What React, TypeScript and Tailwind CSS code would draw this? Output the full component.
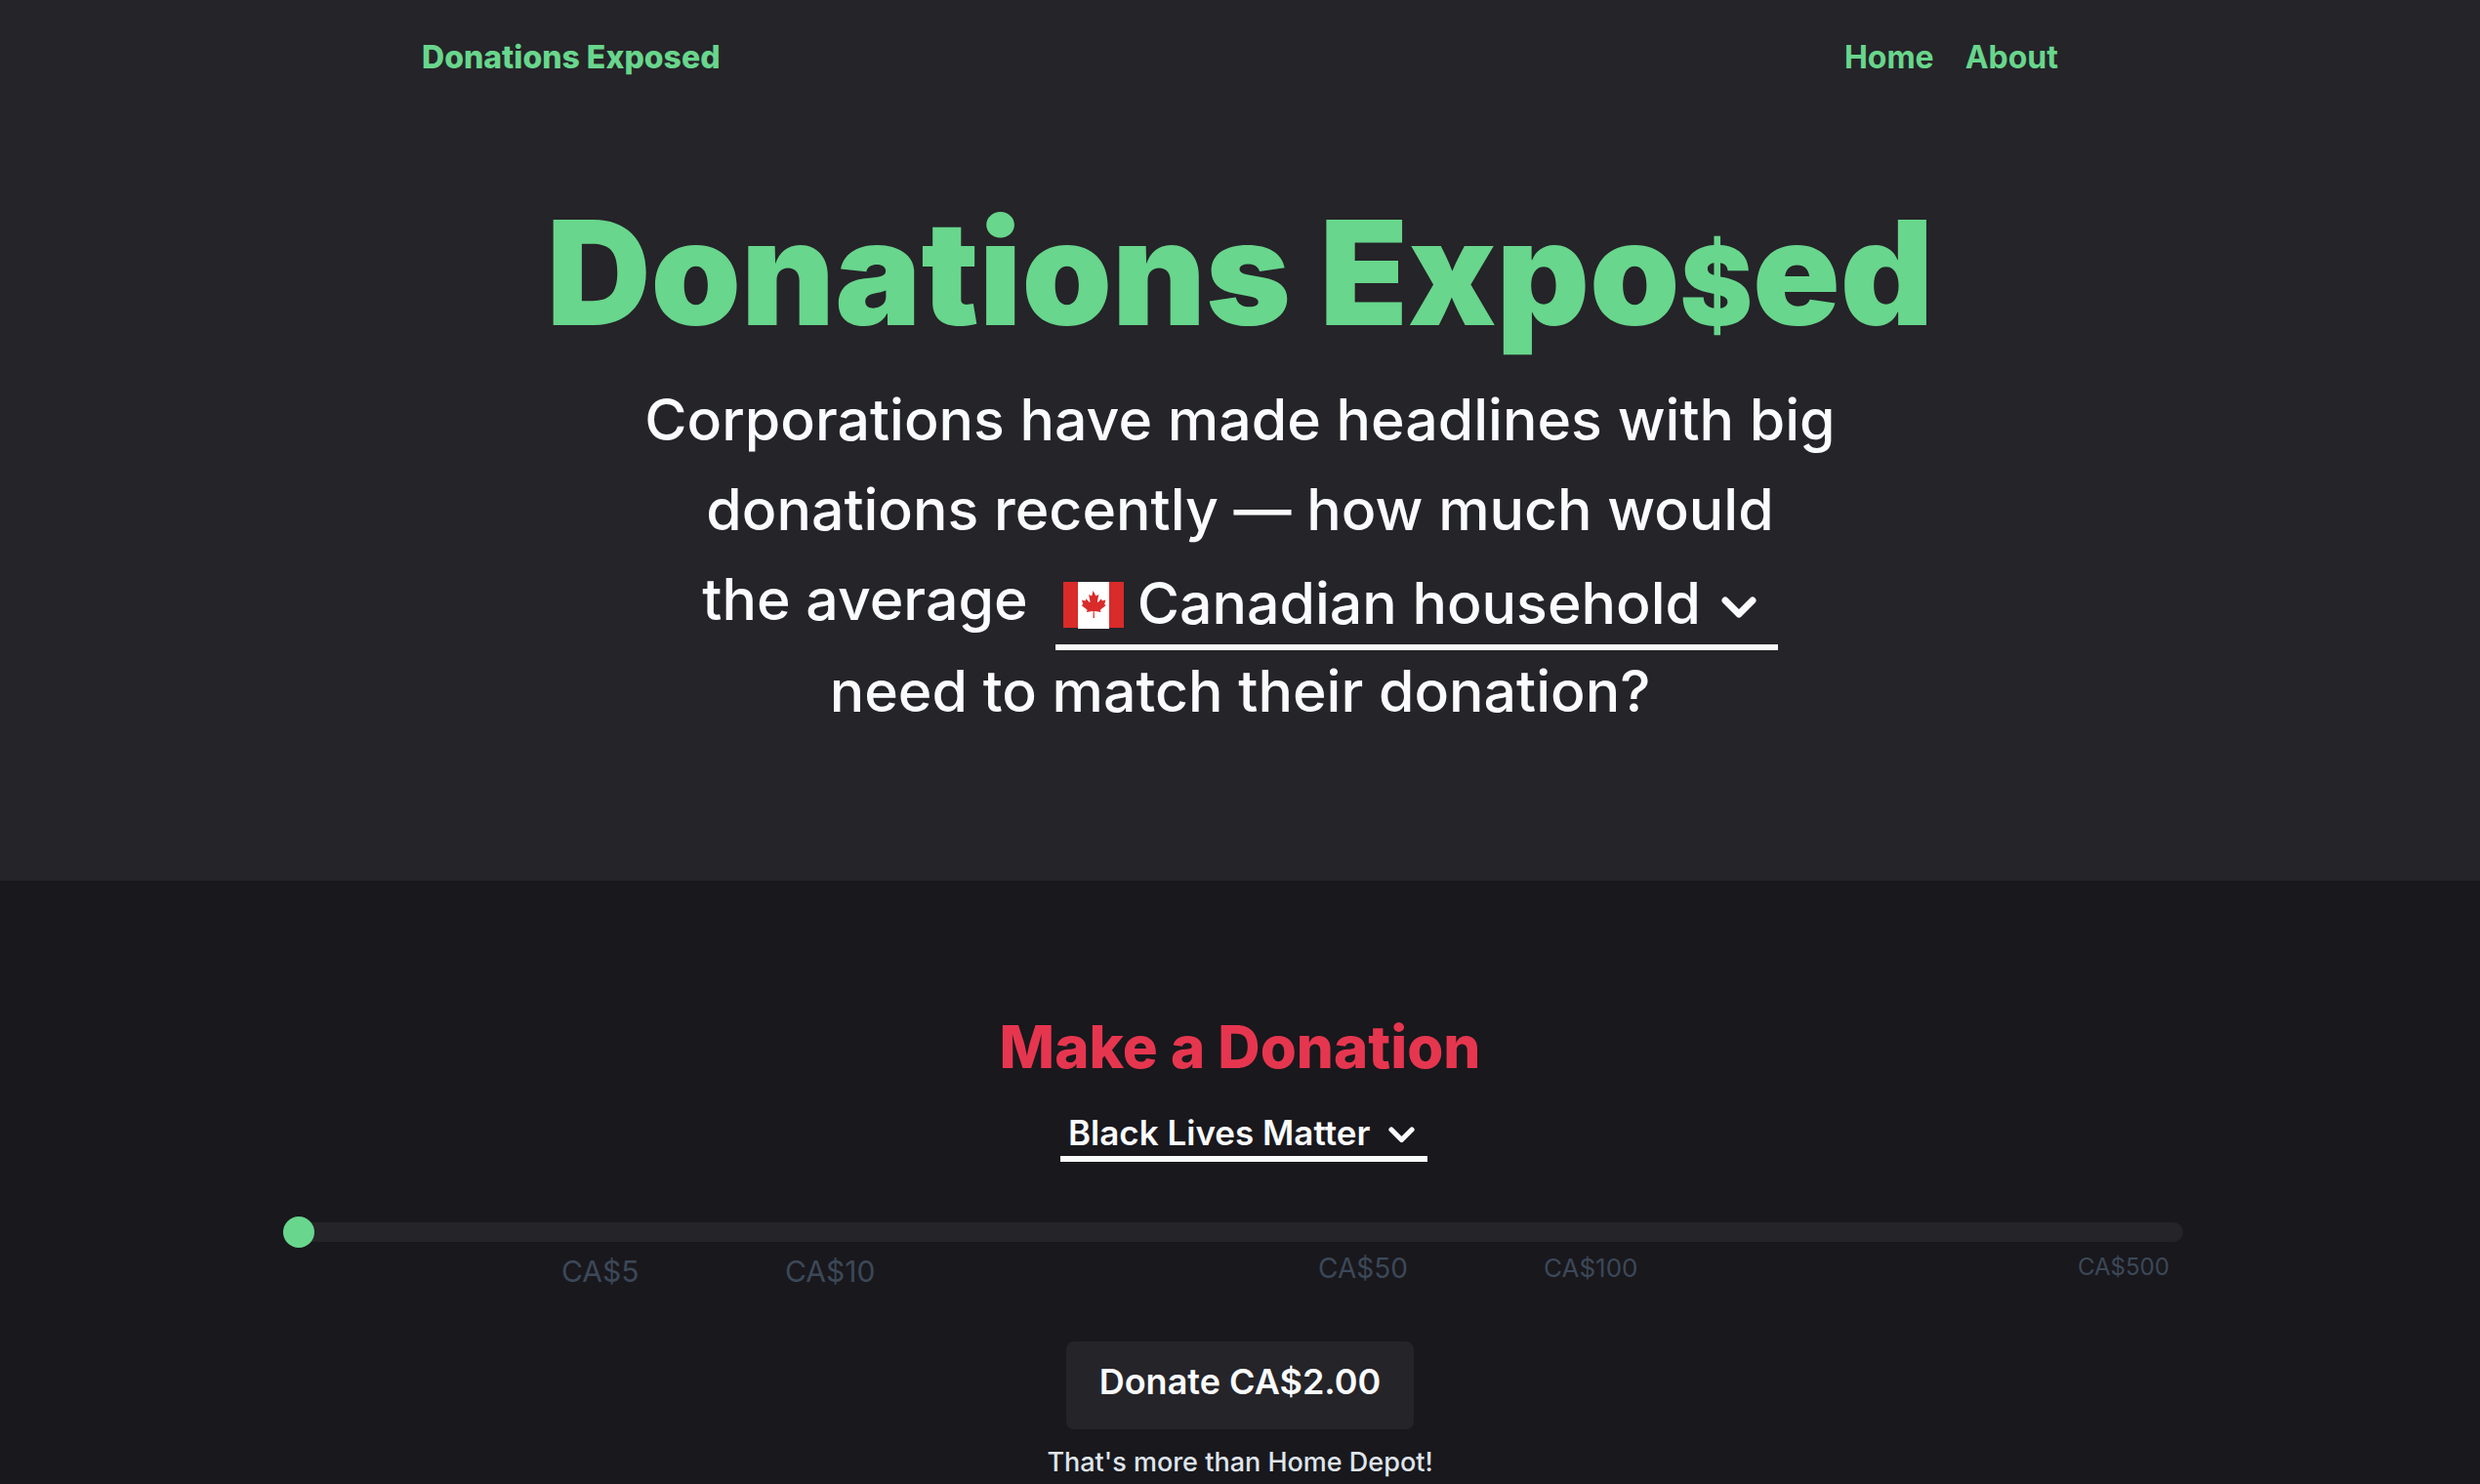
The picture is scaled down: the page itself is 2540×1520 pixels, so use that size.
import { useState } from "react";
import type { ReactNode } from "react";
import clsx from "clsx";

const ticks = [
  { amount: 5, className: "col-start-2 text-[30px] leading-8" },
  { amount: 10, className: "text-[30px] leading-8" },
  { amount: 50, className: "text-[28px] leading-[26px]" },
  { amount: 100, className: "text-[26px] leading-[26px]" },
  { amount: 500, className: "text-[24px] leading-6" },
];

function CanadaFlag({ className }: { className?: string }) {
  return (
    <svg viewBox="0 0 62 48" className={className} aria-hidden="true">
      <rect width="62" height="47" fill="#d82b2a" />
      <rect x="15" width="32" height="48" fill="#ffffff" />
      <path
        fill="#d82b2a"
        d="M30.6 9l2.4 4.8c.4.6.8.5 1.300.2l2-1-1.300 6.800c-.3 1.300.6 1.300 1 .7l3-3.300.5 1.700c.2.5.5.4.9.3l3-.6-1 3.600c-.2.6-.3.9.2 1.100l1.200.6-5.400 4.400c-.6.5-.6.8-.4 1.300l.5 1.500-5.900-1c-.6-.1-.9 0-.9.5l.2 6.400h-1.400l.2-6.400c0-.5-.3-.6-.9-.5l-5.900 1 .5-1.500c.2-.5.2-.8-.4-1.300l-5.400-4.400 1.200-.6c.5-.2.4-.5.2-1.100l-1-3.600 3 .6c.4.1.7.2.9-.3l.5-1.700 3 3.300c.4.6 1.300.6 1-.7l-1.300-6.800 2 1c.5.3.9.4 1.300-.2z"
      />
    </svg>
  );
}

function Chevron({ className }: { className?: string }) {
  return (
    <svg viewBox="0 0 36 22" fill="none" className={className} aria-hidden="true">
      <path
        d="M4 4l14 14L32 4"
        stroke="currentColor"
        strokeWidth="7"
        strokeLinecap="round"
        strokeLinejoin="round"
      />
    </svg>
  );
}

function NavLink({ href, children }: { href: string; children: ReactNode }) {
  return (
    <a href={href} className="text-[32px] leading-[48px] font-bold">
      {children}
    </a>
  );
}

export default function App() {
  const [household, setHousehold] = useState("ca");
  const [charity, setCharity] = useState("blm");
  const [position, setPosition] = useState(0);

  return (
    <div className="min-h-screen bg-[#19181d] font-['Inter',sans-serif] text-[#fafbfd]">
      <header className="bg-[#252429] pt-[35px] pb-[148px]">
        <nav className="mx-auto flex max-w-[1676px] justify-between text-[#68d68c]">
          <a href="/" className="text-[32px] leading-[48px] font-extrabold">
            Donations Exposed
          </a>
          <div className="flex gap-8">
            <NavLink href="/">Home</NavLink>
            <NavLink href="/about">About</NavLink>
          </div>
        </nav>

        <h1 className="mt-[125px] text-center text-[148px] leading-[144px] font-black text-[#68d68c]">
          Donations Expo<span className="text-[112px] leading-none">$</span>ed
        </h1>

        <div className="mt-8 text-center text-[59px] leading-[92px] font-medium">
          <p>Corporations have made headlines with big</p>
          <p>donations recently — how much would</p>
          <div className="flex h-[94px] items-start justify-center gap-7">
            <label htmlFor="household">the average</label>
            <div className="relative">
              <CanadaFlag className="pointer-events-none absolute top-7 left-2 h-12 w-[62px]" />
              <select
                id="household"
                value={household}
                onChange={(e) => setHousehold(e.target.value)}
                className="block h-[98px] w-[740px] appearance-none border-b-[6px] border-[#fafbfd] bg-transparent pt-1 pl-[84px]"
              >
                <option value="ca">Canadian household</option>
              </select>
              <Chevron className="pointer-events-none absolute top-[43px] right-[22px] w-9" />
            </div>
          </div>
          <p>need to match their donation?</p>
        </div>
      </header>

      <main className="flex flex-col items-center pt-[130px]">
        <h2 className="text-[60px] leading-[80px] font-extrabold text-[#e6364f]">Make a Donation</h2>

        <div className="relative mt-6 ml-2">
          <select
            aria-label="Charity"
            value={charity}
            onChange={(e) => setCharity(e.target.value)}
            className="block h-[54px] w-[376px] appearance-none border-b-[6px] border-[#fafbfd] bg-transparent pl-2 text-[35px] leading-[48px] font-semibold"
          >
            <option value="blm">Black Lives Matter</option>
          </select>
          <Chevron className="pointer-events-none absolute top-[18px] right-[13px] w-[27px]" />
        </div>

        <div className="mt-14 w-full max-w-[1960px] pr-[14px]">
          <input
            type="range"
            aria-label="Donation amount"
            min={0}
            max={100}
            value={position}
            onChange={(e) => setPosition(Number(e.target.value))}
            className={clsx(
              "block h-8 w-full cursor-pointer appearance-none bg-transparent",
              "[&::-webkit-slider-runnable-track]:h-5 [&::-webkit-slider-runnable-track]:rounded-full [&::-webkit-slider-runnable-track]:bg-[#252429]",
              "[&::-webkit-slider-thumb]:-mt-1.5 [&::-webkit-slider-thumb]:size-8 [&::-webkit-slider-thumb]:appearance-none [&::-webkit-slider-thumb]:rounded-full [&::-webkit-slider-thumb]:bg-[#68d68c]"
            )}
          />
          <div className="mt-2 grid h-8 grid-cols-[285fr_229fr_546fr_231fr_547fr_108fr] items-start text-[#3c4858]">
            {ticks.map((tick) => (
              <span key={tick.amount} className={tick.className}>
                CA${tick.amount}
              </span>
            ))}
          </div>
        </div>

        <button
          type="button"
          className="mt-14 h-[90px] w-[356px] rounded-lg bg-[#252429] pb-2 text-[36px] font-semibold"
        >
          Donate CA$2.00
        </button>
        <p className="mt-4 text-[27px] leading-9 font-medium text-[#dfe5ec]">That's more than Home Depot!</p>
      </main>
    </div>
  );
}
